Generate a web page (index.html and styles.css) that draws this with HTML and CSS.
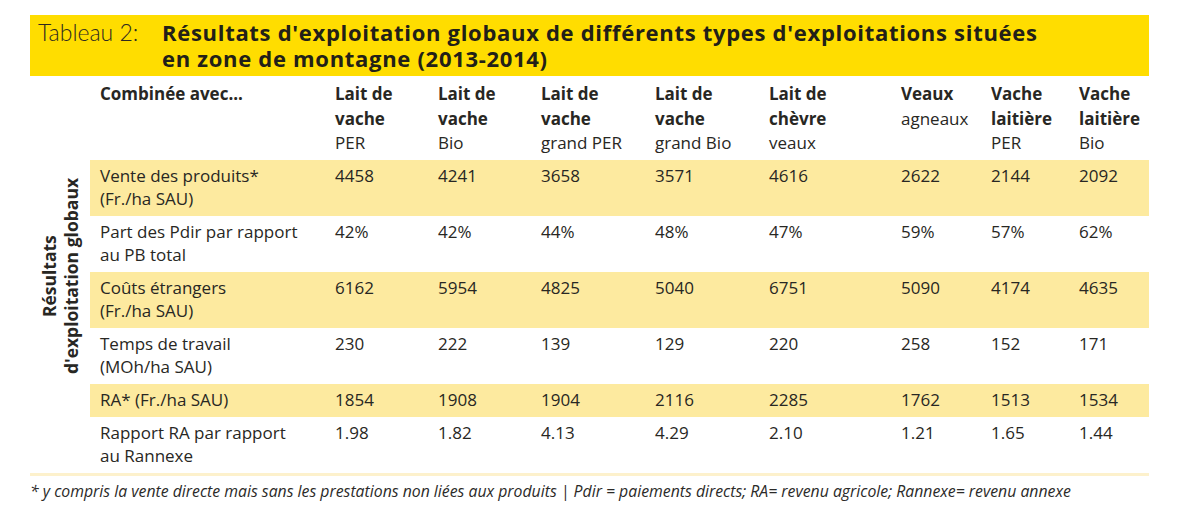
FILE: index.html
```html
<!DOCTYPE html>
<html lang="fr">
<head>
<meta charset="utf-8">
<title>Tableau 2</title>
<link rel="stylesheet" href="styles.css">
</head>
<body>
<div class="page">
  <div class="banner">
    <span class="tab">Tableau 2:</span>
    <h1 class="title">Résultats d'exploitation globaux de différents types d'exploitations situées<br>en zone de montagne (2013-2014)</h1>
  </div>
  <table class="data">
    <colgroup>
      <col class="w-side"><col class="w-label">
      <col class="w-103"><col class="w-103"><col class="w-114"><col class="w-114">
      <col class="w-132"><col class="w-90"><col class="w-88"><col class="w-80">
    </colgroup>
    <tbody>
      <tr>
        <th class="side" rowspan="7"><div class="side-label">Résultats<br>d'exploitation globaux</div></th>
        <th class="head"><b>Combinée avec...</b></th>
        <th class="head"><b>Lait de<br>vache</b><br>PER</th>
        <th class="head"><b>Lait de<br>vache</b><br>Bio</th>
        <th class="head"><b>Lait de<br>vache</b><br>grand PER</th>
        <th class="head"><b>Lait de<br>vache</b><br>grand Bio</th>
        <th class="head"><b>Lait de<br>chèvre</b><br>veaux</th>
        <th class="head"><b>Veaux</b><br>agneaux</th>
        <th class="head"><b>Vache<br>laitière</b><br>PER</th>
        <th class="head"><b>Vache<br>laitière</b><br>Bio</th>
      </tr>
      <tr class="hl">
        <td>Vente des produits*<br>(Fr./ha SAU)</td>
        <td>4458</td><td>4241</td><td>3658</td><td>3571</td><td>4616</td><td>2622</td><td>2144</td><td>2092</td>
      </tr>
      <tr>
        <td>Part des Pdir par rapport<br>au PB total</td>
        <td>42%</td><td>42%</td><td>44%</td><td>48%</td><td>47%</td><td>59%</td><td>57%</td><td>62%</td>
      </tr>
      <tr class="hl">
        <td>Coûts étrangers<br>(Fr./ha SAU)</td>
        <td>6162</td><td>5954</td><td>4825</td><td>5040</td><td>6751</td><td>5090</td><td>4174</td><td>4635</td>
      </tr>
      <tr>
        <td>Temps de travail<br>(MOh/ha SAU)</td>
        <td>230</td><td>222</td><td>139</td><td>129</td><td>220</td><td>258</td><td>152</td><td>171</td>
      </tr>
      <tr class="hl">
        <td>RA* (Fr./ha SAU)</td>
        <td>1854</td><td>1908</td><td>1904</td><td>2116</td><td>2285</td><td>1762</td><td>1513</td><td>1534</td>
      </tr>
      <tr>
        <td>Rapport RA par rapport<br>au Rannexe</td>
        <td>1.98</td><td>1.82</td><td>4.13</td><td>4.29</td><td>2.10</td><td>1.21</td><td>1.65</td><td>1.44</td>
      </tr>
    </tbody>
  </table>
  <p class="note">* y compris la vente directe mais sans les prestations non liées aux produits | Pdir = paiements directs; RA= revenu agricole; Rannexe= revenu annexe</p>
</div>
</body>
</html>
```
FILE: styles.css
```css
html, body {
  margin: 0;
  padding: 0;
  background: #ffffff;
}

.page {
  padding: 15px 0 0 30px;
  width: 1119px;
  font-family: "Open Sans", Lato, "Liberation Sans", sans-serif;
  color: #282723;
}

.banner {
  display: flex;
  align-items: flex-start;
  background: #ffdd00;
  padding: 4px 0 5px 8px;
  height: 52px;
}

.tab {
  width: 124px;
  flex: none;
  font-family: Lato, "Open Sans", sans-serif;
  font-size: 23px;
  line-height: 26px;
  font-weight: 300;
  color: #2e2a20;
}

.title {
  margin: 0;
  font-size: 22px;
  line-height: 26px;
  font-weight: 700;
  letter-spacing: 0.7px;
  color: #222018;
}

.data {
  margin-top: 4px;
  width: 1119px;
  border-collapse: collapse;
  table-layout: fixed;
  font-size: 17px;
  line-height: 23px;
  border-bottom: 3px solid #fdf1cc;
}

.w-side { width: 60px; }
.w-label { width: 235px; }
.w-103 { width: 103px; }
.w-114 { width: 114px; }
.w-132 { width: 132px; }
.w-90 { width: 90px; }
.w-88 { width: 88px; }
.w-80 { width: 80px; }

.data th,
.data td {
  text-align: left;
  vertical-align: top;
  padding: 4px 0 6px 10px;
  font-weight: 400;
  white-space: nowrap;
}

.data td {
  height: 23px;
}

.data th.head {
  line-height: 24.5px;
  padding-top: 2px;
  padding-bottom: 4px;
  height: 74px;
}

.data th.head b {
  font-weight: 700;
}

.data th.side {
  padding: 0;
  vertical-align: middle;
  text-align: center;
}

.side-label {
  writing-mode: vertical-rl;
  transform: rotate(180deg);
  font-weight: 700;
  font-size: 17.5px;
  line-height: 22px;
  text-align: center;
  margin: 0 auto;
}

.data tr.hl td {
  background: #fdea9f;
}

.note {
  margin: 5px 0 0 0;
  font-size: 15.8px;
  line-height: 20px;
  font-style: italic;
  color: #2b2a28;
}
```
